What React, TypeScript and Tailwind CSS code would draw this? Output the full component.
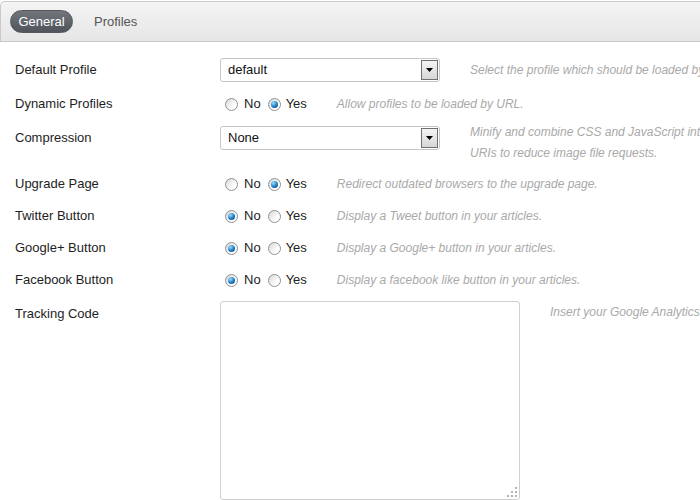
import React from "react";

function Radio({ checked }: { checked: boolean }) {
  return (
    <span className="relative inline-flex h-[13px] w-[13px] items-center justify-center rounded-full border border-[#8e8f8f] bg-[linear-gradient(135deg,#d8d8d8,#ffffff_70%)]">
      {checked && (
        <span className="h-[7px] w-[7px] rounded-full bg-[radial-gradient(circle_at_35%_30%,#9fe0ff,#1a79c2_55%,#0a3d6e)]" />
      )}
    </span>
  );
}

function RadioPair({ yes }: { yes: boolean }) {
  return (
    <div className="flex shrink-0 items-center pl-[5px] text-[13px] text-[#222]">
      <Radio checked={!yes} />
      <span className="ml-[6px]">No</span>
      <span className="ml-[7px] inline-flex">
        <Radio checked={yes} />
      </span>
      <span className="ml-[5px]">Yes</span>
    </div>
  );
}

function Select({ value }: { value: string }) {
  return (
    <div className="relative flex h-[24px] w-[220px] shrink-0 items-center rounded-[3px] border border-[#c6c6c6] bg-white pl-[7px] text-[13px] text-[#111]">
      {value}
      <div className="absolute right-[1px] top-[1px] flex h-[20px] w-[17px] items-center justify-center border border-[#707070] bg-[linear-gradient(#f4f4f4,#d6d6d6)]">
        <svg width="7" height="4" viewBox="0 0 7 4">
          <path d="M0 0h7L3.5 4z" fill="#000" />
        </svg>
      </div>
    </div>
  );
}

function Desc({ children, className = "" }: { children: React.ReactNode; className?: string }) {
  return <div className={"text-[12px] italic text-[#a9a9a9] " + className}>{children}</div>;
}

function Label({ children, lh }: { children: React.ReactNode; lh: string }) {
  return <div className={"w-[220px] shrink-0 pl-[15px] text-[13px] text-[#1e1e1e] " + lh}>{children}</div>;
}

export default function App() {
  return (
    <div className="h-[500px] w-[700px] overflow-hidden bg-white font-['Liberation_Sans',Arial,sans-serif]">
      <div className="mt-[1px] flex h-[41px] items-center rounded-tl-[5px] border-l border-t border-b border-[#c9c9c9] bg-[linear-gradient(#f4f4f4,#e6e6e6)] pl-[9px]">
        <div className="flex h-[23px] w-[63px] items-center justify-center rounded-full border border-[#54585e] bg-[linear-gradient(#72767c,#50555b)] text-[13px] text-white">
          General
        </div>
        <div className="ml-[21px] text-[13px] text-[#555]">Profiles</div>
      </div>

      <div className="flex flex-col">
        <div className="mt-[16px] flex h-[24px] items-center overflow-hidden">
          <Label lh="leading-[24px]">Default Profile</Label>
          <Select value="default" />
          <Desc className="ml-[30px] whitespace-nowrap">Select the profile which should be loaded by default.</Desc>
        </div>

        <div className="mt-[11px] flex h-[22px] items-center overflow-hidden">
          <Label lh="leading-[22px]">Dynamic Profiles</Label>
          <RadioPair yes={true} />
          <Desc className="ml-[30px] whitespace-nowrap">Allow profiles to be loaded by URL.</Desc>
        </div>

        <div className="mt-[11px] flex items-start overflow-hidden">
          <Label lh="leading-[24px]">Compression</Label>
          <Select value="None" />
          <Desc className="ml-[30px] mt-[-4px] whitespace-nowrap leading-[21px]">
            Minify and combine CSS and JavaScript into single files and use data
            <br />
            URIs to reduce image file requests.
          </Desc>
        </div>

        {[
          { l: "Upgrade Page", y: true, d: "Redirect outdated browsers to the upgrade page.", mt: "mt-[9px]" },
          { l: "Twitter Button", y: false, d: "Display a Tweet button in your articles.", mt: "mt-[10px]" },
          { l: "Google+ Button", y: false, d: "Display a Google+ button in your articles.", mt: "mt-[10px]" },
          { l: "Facebook Button", y: false, d: "Display a facebook like button in your articles.", mt: "mt-[10px]" },
        ].map((r) => (
          <div key={r.l} className={"flex h-[22px] items-center " + r.mt}>
            <Label lh="leading-[22px]">{r.l}</Label>
            <RadioPair yes={r.y} />
            <Desc className="ml-[30px] whitespace-nowrap">{r.d}</Desc>
          </div>
        ))}

        <div className="mt-[10px] flex items-start overflow-hidden">
          <Label lh="leading-[16px] pt-[5px]">Tracking Code</Label>
          <div className="relative h-[199px] w-[300px] shrink-0 rounded-[3px] border border-[#cfcfcf] bg-white">
            <svg className="absolute bottom-[1px] right-[1px]" width="12" height="12" viewBox="0 0 12 12">
              <g fill="#b5b5b5">
                <rect x="9" y="1" width="2" height="2" />
                <rect x="5" y="5" width="2" height="2" />
                <rect x="9" y="5" width="2" height="2" />
                <rect x="1" y="9" width="2" height="2" />
                <rect x="5" y="9" width="2" height="2" />
                <rect x="9" y="9" width="2" height="2" />
              </g>
            </svg>
          </div>
          <Desc className="ml-[30px] mt-[2px] whitespace-nowrap">Insert your Google Analytics tracking code.</Desc>
        </div>
      </div>
    </div>
  );
}
